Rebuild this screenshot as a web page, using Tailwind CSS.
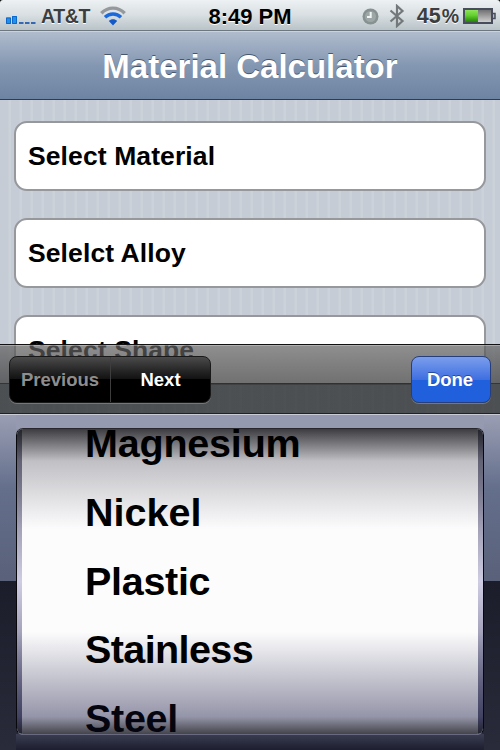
<!DOCTYPE html>
<html lang="en">
<head>
    <meta charset="UTF-8">
    <meta name="viewport" content="width=device-width, initial-scale=1.0">
    <title>Material Calculator</title>
    <script src="https://cdn.jsdelivr.net/npm/@tailwindcss/browser@4"></script>
    <style>
        body {
            font-family: 'Liberation Sans', Arial, sans-serif;
        }
    </style>
</head>
<body class="bg-black">
    <div class="relative w-[500px] h-[750px] overflow-hidden flex flex-col font-bold whitespace-nowrap">

        <!-- Status bar -->
        <header class="h-[31px] shrink-0 grid grid-cols-3 items-center rounded-t-[3px] border-b border-[#6c7780] bg-linear-to-b from-[#edf1f3] via-[#d9dfe2] to-[#b9c3c8] text-[#3b3d40]">
            <div class="flex items-center pl-[6px]">
                <svg width="31" height="10" viewBox="0 0 31 10" class="mt-[7px]">
                    <path d="M0 2.500h5v6.500H0zM6 1h5v8H6z" fill="#1c92ee"/>
                    <path d="M.5 3h4v5.500h-4zM6.500 1.500h4v7h-4z" fill="none" stroke="#0f66c6"/>
                    <path d="M13 7h4.500v2H13zM19 7h4.500v2H19zM25 7h4.500v2H25z" fill="#3568b4"/>
                </svg>
                <span class="ml-[4px] text-[19.500px] leading-[32px] tracking-[-0.4px] [text-shadow:0_1px_0_#fff]">AT&amp;T</span>
                <svg width="26" height="20" viewBox="0 0 26 20" class="ml-[10px]" fill="none">
                    <path d="M1.300 7.300C8 .4 18 .4 24.700 7.300" stroke="#96999c" stroke-width="3.400"/>
                    <path d="M5 11.300C9.500 6.800 16.500 6.800 21 11.300" stroke="#1a6ade" stroke-width="3.400"/>
                    <path d="M8.800 15C11 12.500 15 12.500 17.200 15L13 19.500z" fill="#1459c8"/>
                </svg>
            </div>
            <div class="text-center text-[22px] leading-[31px] text-black [text-shadow:0_1px_0_#fff]">8:49 PM</div>
            <div class="flex items-center justify-end pr-[4px]">
                <svg width="17" height="17" viewBox="0 0 17 17">
                    <circle cx="8.500" cy="8.500" r="8" fill="#87918f"/>
                    <circle cx="8.500" cy="8.500" r="5.500" fill="#9ea7a7"/>
                    <path d="M8.700 4v5H5" fill="none" stroke="#f0f4f4" stroke-width="2"/>
                </svg>
                <svg width="16" height="24" viewBox="0 0 16 24" class="ml-[10px]" fill="none" stroke="#73787a" stroke-width="2.200">
                    <path d="M1.500 6.500L13.500 17 8 22V2L13.500 7 1.500 17.500"/>
                </svg>
                <span class="ml-[12px] text-[21.500px] leading-[32px] [text-shadow:0_1px_0_#fff]">45</span>
                <span class="ml-[1px] text-[19.500px] leading-[32px] [text-shadow:0_1px_0_#fff]">%</span>
                <svg width="33" height="18" viewBox="0 0 33 18" class="ml-[4px]">
                    <defs>
                        <linearGradient id="charge" x2="0" y2="1"><stop stop-color="#8ee35a"/><stop offset=".45" stop-color="#63d02e"/><stop offset="1" stop-color="#238408"/></linearGradient>
                        <linearGradient id="empty" x2="0" y2="1"><stop stop-color="#6a6a6c"/><stop offset="1" stop-color="#d6d6d6"/></linearGradient>
                    </defs>
                    <rect x="1" y="2" width="28" height="14" fill="url(#empty)" stroke="#474d5b" stroke-width="2"/>
                    <path d="M2 3h13v12H2z" fill="url(#charge)"/>
                    <path d="M30 6.500h2v5h-2" fill="#bbb" stroke="#474d5b" stroke-width="1.500"/>
                </svg>
            </div>
        </header>

        <!-- Title bar -->
        <div class="h-[69px] shrink-0 border-t border-t-[#c9d2de] border-b border-b-[#2f3d50] bg-linear-to-b from-[#b0bccd] via-[#8497b2] to-[#6d84a2] text-center">
            <h1 class="text-[33px] leading-[70px] text-white [text-shadow:0_-1.500px_0_#46566c]">Material Calculator</h1>
        </div>

        <!-- Form -->
        <main class="h-[314px] shrink-0 overflow-hidden flex flex-col gap-[27px] px-[14px] pt-[21px] text-[26.500px] tracking-[0.1px] bg-[#c5ccd4] bg-[repeating-linear-gradient(90deg,#c5ccd5_0px,#c5ccd5_8px,#cbd2d9_9px,#cbd2d9_11px)]">
            <div class="h-[70px] shrink-0 rounded-[13px] border-[2px] border-[#96989c] bg-white pl-[12px] leading-[67px]">Select Material</div>
            <div class="h-[70px] shrink-0 rounded-[13px] border-[2px] border-[#96989c] bg-white pl-[12px] leading-[67px]">Selelct Alloy</div>
            <div class="h-[70px] shrink-0 rounded-[13px] border-[2px] border-[#96989c] bg-white pl-[12px] leading-[67px]">Select Shape</div>
        </main>

        <!-- Keyboard toolbar, floats over the form -->
        <div class="absolute left-0 top-[344px] w-full h-[70px] flex items-start justify-between border-t border-[#111] px-[9px] pt-[11px] text-[18.500px] bg-linear-to-b from-[#646464]/72 from-0% via-[#393939]/72 via-56% to-[#1d1f20]/72 to-56%">
            <div class="absolute inset-x-0 top-0 h-px bg-white/30"></div>
            <div class="absolute inset-x-0 top-[38px] h-px bg-[#222]/70"></div>
            <div class="absolute inset-x-0 bottom-0 h-px bg-[#222]"></div>
            <div class="relative flex w-[202px] h-[47px] rounded-[8px] border border-[#191919] overflow-hidden leading-[44px] text-center shadow-[0_1px_0_#777] bg-linear-to-b from-[#4b4b4b] from-0% via-[#111] via-50% to-black to-50%">
                <button class="w-[101px] border-r border-[#3d3d3d] text-[#8e8e8e]">Previous</button>
                <button class="flex-1 text-white">Next</button>
            </div>
            <button class="relative w-[80px] h-[47px] rounded-[8px] border-[1.500px] border-[#263f7c] text-white leading-[43px] pr-[2px] shadow-[0_1px_0_#777] bg-linear-to-b from-[#7c9dec] from-0% via-[#3f6fe0] via-50% to-[#2160dd] to-51% [text-shadow:0_-1px_0_#274a9a]">Done</button>
        </div>

        <!-- Picker -->
        <section class="relative h-[336px] shrink-0 border-t border-[#c9ccd6] px-[16px] pt-[13px] bg-linear-to-b from-[#9a9eb3] from-0% via-[#646f8c] via-22% to-[#474859] to-49.500%">
            <div class="absolute inset-x-0 bottom-0 h-[169px] bg-linear-to-b from-[#1c1d2b] to-[#292b3a]"></div>
            <div class="absolute inset-x-[16px] top-0 h-[14px] bg-[#969ab0]"></div>
            <div class="absolute inset-x-[16px] bottom-0 h-[16px] bg-linear-to-b from-[#3b3d52] to-[#1d1f2f]"></div>
            <div class="relative h-[307px] rounded-[7px] border border-x-[1.500px] border-t-[#27272d] border-x-[#08080c] border-b-[#696a80] overflow-hidden bg-[#fcfcfd]">
                <!-- side rails of the wheel -->
                <div class="absolute inset-y-0 left-0 w-[5px] bg-linear-to-b from-[#55556b] via-[#cfcde4] to-[#55556f]"></div>
                <div class="absolute inset-y-0 right-0 w-[5px] bg-linear-to-b from-[#55556b] via-[#cfcde4] to-[#55556f]"></div>
                <!-- wheel shading -->
                <div class="absolute inset-x-0 top-0 h-[100px] bg-linear-to-b from-[#1b1b20]/85 from-0% via-[#50505c]/35 via-32% to-transparent"></div>
                <div class="absolute inset-x-0 bottom-0 h-[102px] bg-linear-to-t from-[#16161f]/80 from-0% via-[#1c1c46]/46 via-17% to-transparent"></div>
                <ul class="relative h-full pl-[68px] text-[39.500px] leading-[68.750px] text-black">
                    <li class="-mt-[20px] tracking-[-0.2px]">Magnesium</li>
                    <li>Nickel</li>
                    <li class="tracking-[-0.3px]">Plastic</li>
                    <li class="tracking-[-0.6px]">Stainless</li>
                    <li class="tracking-[-0.3px] text-[#05050f]">Steel</li>
                </ul>
            </div>
        </section>
    </div>
</body>
</html>
